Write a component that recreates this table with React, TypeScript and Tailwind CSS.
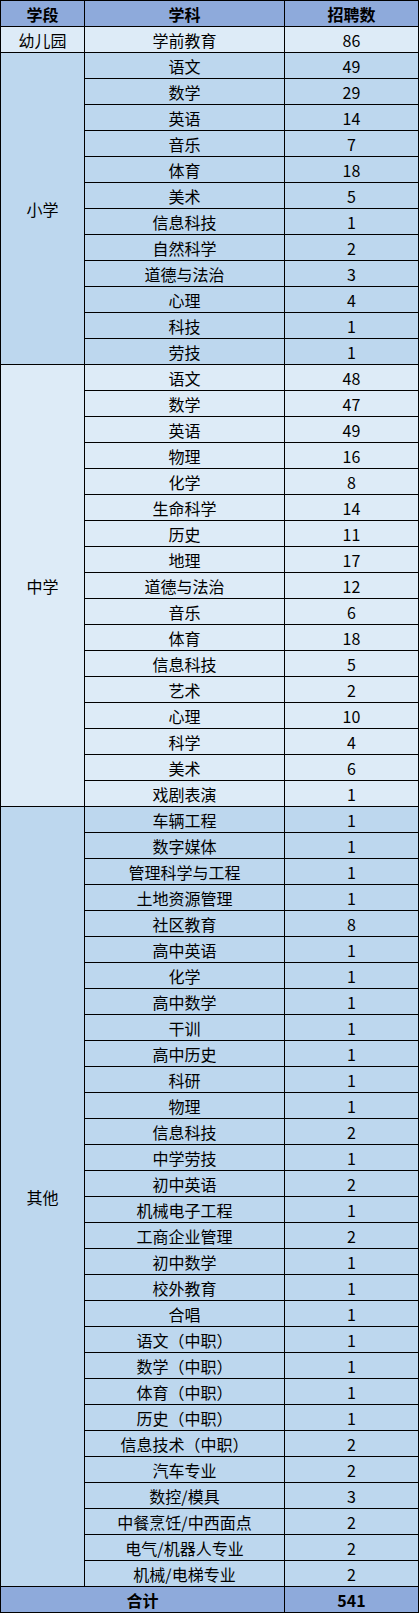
import React from "react";

const primary = ["语文:49", "数学:29", "英语:14", "音乐:7", "体育:18", "美术:5", "信息科技:1", "自然科学:2", "道德与法治:3", "心理:4", "科技:1", "劳技:1"];
const middle = ["语文:48", "数学:47", "英语:49", "物理:16", "化学:8", "生命科学:14", "历史:11", "地理:17", "道德与法治:12", "音乐:6", "体育:18", "信息科技:5", "艺术:2", "心理:10", "科学:4", "美术:6", "戏剧表演:1"];
const other = ["车辆工程:1", "数字媒体:1", "管理科学与工程:1", "土地资源管理:1", "社区教育:8", "高中英语:1", "化学:1", "高中数学:1", "干训:1", "高中历史:1", "科研:1", "物理:1", "信息科技:2", "中学劳技:1", "初中英语:2", "机械电子工程:1", "工商企业管理:2", "初中数学:1", "校外教育:1", "合唱:1", "语文（中职）:1", "数学（中职）:1", "体育（中职）:1", "历史（中职）:1", "信息技术（中职）:2", "汽车专业:2", "数控/模具:3", "中餐烹饪/中西面点:2", "电气/机器人专业:2", "机械/电梯专业:2"];

const cell = "flex items-center justify-center h-[25px] text-[16px] leading-none text-black";

function Rows({ items, bg }: { items: string[]; bg: string }) {
  return (
    <>
      {items.map((it, i) => {
        const [name, n] = it.split(":");
        return (
          <React.Fragment key={i}>
            <div className={`${cell} ${bg}`}>{name}</div>
            <div className={`${cell} ${bg}`}>{n}</div>
          </React.Fragment>
        );
      })}
    </>
  );
}

export default function App() {
  return (
    <div
      className="w-[419px] bg-black p-px"
      style={{ fontFamily: '"Noto Sans CJK SC", "Noto Sans", sans-serif' }}
    >
      <div className="grid grid-cols-[83px_199px_133px] gap-px">
        <div className={`${cell} bg-[#8eaadb] font-bold text-[#262626]`}>学段</div>
        <div className={`${cell} bg-[#8eaadb] font-bold text-[#262626]`}>学科</div>
        <div className={`${cell} bg-[#8eaadb] font-bold text-[#262626]`}>招聘数</div>

        <div className={`${cell} bg-[#ddebf7]`}>幼儿园</div>
        <div className={`${cell} bg-[#ddebf7]`}>学前教育</div>
        <div className={`${cell} bg-[#ddebf7]`}>86</div>

        <div className="row-span-[12] flex items-center justify-center bg-[#bdd7ee] text-[16px] text-black">小学</div>
        <Rows items={primary} bg="bg-[#bdd7ee]" />

        <div className="row-span-[17] flex items-center justify-center bg-[#ddebf7] text-[16px] text-black">中学</div>
        <Rows items={middle} bg="bg-[#ddebf7]" />

        <div className="row-span-[30] flex items-center justify-center bg-[#bdd7ee] text-[16px] text-black">其他</div>
        <Rows items={other} bg="bg-[#bdd7ee]" />

        <div className={`${cell} col-span-2 bg-[#8eaadb] font-bold text-[#262626]`}>合计</div>
        <div className={`${cell} bg-[#8eaadb] font-bold text-[#262626]`}>541</div>
      </div>
    </div>
  );
}
